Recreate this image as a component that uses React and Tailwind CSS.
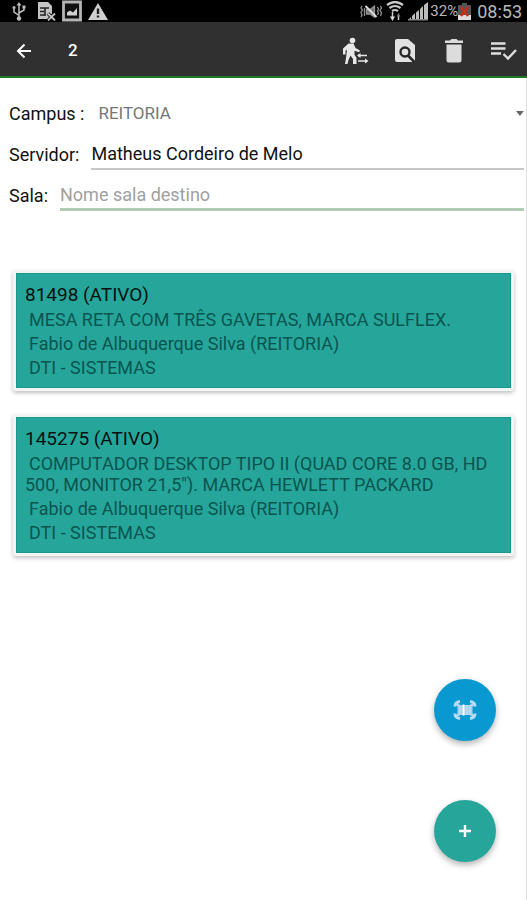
import { useState } from "react";

const items = [
  {
    code: "81498 (ATIVO)",
    description: "MESA RETA COM TRÊS GAVETAS, MARCA SULFLEX.",
    owner: "Fabio de Albuquerque Silva (REITORIA)",
    room: "DTI - SISTEMAS",
  },
  {
    code: "145275 (ATIVO)",
    description:
      'COMPUTADOR DESKTOP TIPO II (QUAD CORE 8.0 GB, HD 500, MONITOR 21,5"). MARCA HEWLETT PACKARD',
    owner: "Fabio de Albuquerque Silva (REITORIA)",
    room: "DTI - SISTEMAS",
  },
];

function UsbIcon() {
  return (
    <svg width="14" height="20" viewBox="0 0 14 20" fill="none" stroke="#bdbdbd" strokeWidth="1.5">
      <path d="M7 3v14M7 14.500L2 11V7M7 12l5-3V6" />
      <path d="M4.500 4.500L7 1l2.500 3.500z" fill="#bdbdbd" stroke="none" />
      <circle cx="7" cy="17.500" r="2.200" fill="#bdbdbd" stroke="none" />
      <circle cx="2" cy="6.500" r="1.500" fill="#bdbdbd" stroke="none" />
      <path d="M10.500 4.500h3v3h-3z" fill="#bdbdbd" stroke="none" />
    </svg>
  );
}

function SimIcon() {
  return (
    <svg width="19" height="20" viewBox="0 0 19 20">
      <path d="M1 1h10l4 4v8l-4 5H1z" fill="#c4c4c4" />
      <path d="M3 7h9M3 10.500h4M3 14h5M8 7v8" stroke="#222" strokeWidth="1.600" />
      <path d="M11 12.500l7 7M18 12.500l-7 7" stroke="#000" strokeWidth="3.500" />
      <path d="M11 12.500l7 7M18 12.500l-7 7" stroke="#c4c4c4" strokeWidth="1.800" />
    </svg>
  );
}

function ImageIcon() {
  return (
    <svg width="20" height="22" viewBox="0 0 20 22">
      <path d="M1.500 2h17v18h-17z" fill="#111" stroke="#b5b5b5" strokeWidth="2.800" />
      <path d="M5 15.500v-3l3-2 3 2 4-4.500v7.500z" fill="#d0d0d0" />
    </svg>
  );
}

function WarningIcon() {
  return (
    <svg width="20" height="17" viewBox="0 0 20 17">
      <path d="M10 0l10 17H0z" fill="#cfcfcf" />
      <path d="M10 5.500v5.500M10 12.500v2" stroke="#222" strokeWidth="2.400" />
    </svg>
  );
}

function VibrateMuteIcon() {
  return (
    <svg width="22" height="15" viewBox="0 0 22 15" fill="none" stroke="#909090" strokeWidth="1.300">
      <path d="M2 2L1 4l1.500 2L1 8.500 2 11l-1 2M4.500 4v8M17.500 3l1 2-1 2 1 2-1 2M20.500 2l1 2-1.500 2.500L21.500 9l-1 3" />
      <path d="M6.500 5.500H10L14.500 2v11L10 10H6.500z" fill="#777" />
      <path d="M5.500 2l11 11" strokeWidth="2" stroke="#ddd" />
    </svg>
  );
}

function WifiIcon() {
  return (
    <svg width="18" height="21" viewBox="0 0 18 21" fill="none" stroke="#cacaca" strokeWidth="2.200">
      <path d="M1 4q8-6 16 0M3.500 7q5.500-4 11 0M6 10q3-2 6 0" />
      <path d="M6.500 11v5M12.500 19v-5" strokeWidth="1.500" />
      <path d="M4 15.500h5L6.500 20z" fill="#ddd" stroke="none" />
      <path d="M10.500 15.500h4L12.500 12z" fill="#777" stroke="none" />
    </svg>
  );
}

function SignalIcon() {
  return (
    <svg width="21" height="20" viewBox="0 0 21 20" fill="#bcbcbc">
      <path d="M0 19l3-3v3zM4 15l3-3v7H4zM8 11.500L11 9v10H8zM12 8l3-3v14h-3zM16 4l4-3v18h-4z" />
      <path d="M0 18h20v1.500H0z" fill="#888" />
    </svg>
  );
}

function BatteryIcon() {
  return (
    <svg width="13" height="19" viewBox="0 0 13 19">
      <path d="M0 3h4V1h5v2h4v15H0z" fill="#555" />
      <path d="M0 13h13v5H0z" fill="#ddd" />
      <path d="M3 5l7 9M10 5l-7 9" stroke="#c62c1c" strokeWidth="2.500" />
    </svg>
  );
}

function BackIcon() {
  return (
    <svg width="16" height="16" viewBox="0 0 16 16" fill="none" stroke="#fff" strokeWidth="2">
      <path d="M15 8H2M8.500 1.500L2 8l6.500 6.500" />
    </svg>
  );
}

function TransferIcon() {
  return (
    <svg width="27" height="28" viewBox="0 0 27 28" fill="#e8e8e8">
      <circle cx="9.500" cy="3.500" r="2.800" />
      <path d="M5.500 6.500h5l2 4.500 4.500 2.500-1 1.800-4.500-1.500v4l2 3V27H10v-5l-2.500-3.500L5.500 23l-1 4H2l1-6 1-8.500-1.500 1.500v3.500H0v-6z" />
      <path d="M15 18.500h9M15 24h9" stroke="#e8e8e8" strokeWidth="1.500" />
      <path d="M17.500 16v5L14 18.500zM22 21.500v5l3.500-2.500z" />
    </svg>
  );
}

function FindPageIcon() {
  return (
    <svg width="20" height="24" viewBox="0 0 20 24">
      <path d="M2 0h11l7 6v15a2 2 0 0 1-2 2H2a2 2 0 0 1-2-2V2a2 2 0 0 1 2-2z" fill="#e2e2e2" />
      <circle cx="10" cy="13" r="4.500" fill="none" stroke="#262626" strokeWidth="2.400" />
      <path d="M13 16.500l6.500 6.500" stroke="#262626" strokeWidth="2.600" />
    </svg>
  );
}

function TrashIcon() {
  return (
    <svg width="18" height="24" viewBox="0 0 18 24" fill="#dcdcdc">
      <path d="M0 1.500h5L6.500 0h5L13 1.500h5V4H0zM1.500 5.500h15V21q0 2.500-2.500 2.500H4q-2.500 0-2.500-2.500z" />
    </svg>
  );
}

function ListCheckIcon() {
  return (
    <svg width="26" height="20" viewBox="0 0 26 20" fill="none" stroke="#dedede" strokeWidth="2.400">
      <path d="M0 2.500h14.500M0 7.500h14.500M0 12.500h10M12.500 13l4.500 4.500L25 9" />
    </svg>
  );
}

function ScanIcon() {
  return (
    <svg width="24" height="20" viewBox="0 0 24 20" fill="none">
      <path d="M2 6.500q0-4.500 5-5M17 1.500q5 .5 5 5M22 13.500q0 4.500-5 5M7 18.500q-5-.5-5-5" stroke="#b9dcf4" strokeWidth="3" />
      <path d="M3.500 3.500l3 3M20.500 3.500l-3 3M3.500 16.500l3-3M20.500 16.500l-3-3" stroke="#b9dcf4" strokeWidth="2.500" />
      <path d="M4.500 5h15v10h-15z" fill="#a9d0ef" />
      <path d="M10.500 4.500v11" stroke="#fff" strokeWidth="2" />
      <path d="M7 5v10M14 5v10M17 5v10" stroke="#c9e2f5" strokeWidth="1" />
    </svg>
  );
}

function PlusIcon() {
  return (
    <svg width="12" height="12" viewBox="0 0 12 12" stroke="#fff" strokeWidth="2.400">
      <path d="M6 0v12M0 6h12" />
    </svg>
  );
}

function StatusBar() {
  return (
    <div className="flex h-[22px] items-center justify-between bg-black pr-[5px] pl-3 text-[#b8b8b8]">
      <div className="flex items-center gap-[11px]">
        <UsbIcon />
        <div className="flex items-center gap-[6px]">
          <SimIcon />
          <ImageIcon />
          <WarningIcon />
        </div>
      </div>
      <div className="flex items-center">
        <div className="flex items-center gap-1">
          <VibrateMuteIcon />
          <WifiIcon />
          <SignalIcon />
        </div>
        <span className="pl-px text-[15px]">32%</span>
        <BatteryIcon />
        <span className="pl-[6px] text-[18px]">08:53</span>
      </div>
    </div>
  );
}

function Toolbar() {
  return (
    <header className="flex h-14 items-center justify-between border-b-2 border-[#1b7a22] bg-[#303030] pt-[3px] pr-[10px] pl-4">
      <div className="flex items-center gap-9">
        <button type="button" aria-label="Voltar">
          <BackIcon />
        </button>
        <span className="text-[17px] font-medium text-white">2</span>
      </div>
      <div className="flex items-center gap-[25px]">
        <button type="button" aria-label="Transferir"><TransferIcon /></button>
        <button type="button" aria-label="Buscar"><FindPageIcon /></button>
        <button type="button" aria-label="Excluir" className="pr-[3px] pl-[5px]"><TrashIcon /></button>
        <button type="button" aria-label="Confirmar"><ListCheckIcon /></button>
      </div>
    </header>
  );
}

function ItemCard({ item }) {
  return (
    <li className="rounded-[3px] border-3 border-[#f4f4f4] bg-[#f4f4f4] shadow-[0_2px_4px_rgba(0,0,0,0.25)]">
      <div className="flex flex-col gap-[3px] border border-[#159b8b] bg-[#26a69a] px-2 pt-[10px] pb-[9px] text-[18px] leading-[21px] text-[#0b5550]">
        <h2 className="text-[19px] leading-[22px] text-[#04110f]">{item.code}</h2>
        <p className="indent-1">{item.description}</p>
        <p className="indent-1">{item.owner}</p>
        <p className="indent-1">{item.room}</p>
      </div>
    </li>
  );
}

export default function App() {
  const [person, setPerson] = useState("Matheus Cordeiro de Melo");
  const [room, setRoom] = useState("");

  return (
    <div className="flex min-h-screen flex-col bg-white font-['Roboto',sans-serif] text-[#111]">
      <StatusBar />
      <Toolbar />
      <main className="flex-1 border-r border-[#e0e0e0]">
        <form className="flex flex-col pt-[15px] pr-[2px] pl-[9px] text-[18px]">
          <div className="flex h-[41px] items-center gap-3">
            <label htmlFor="campus">Campus :</label>
            <div className="flex flex-1 items-center pl-[2px]">
              <select id="campus" className="w-full appearance-none bg-transparent text-[17px] text-[#777] outline-none">
                <option>REITORIA</option>
              </select>
              <svg width="8" height="5" viewBox="0 0 8 5" fill="#666">
                <path d="M0 0h8L4 5z" />
              </svg>
            </div>
          </div>
          <div className="flex h-[41px] items-center gap-3">
            <label htmlFor="servidor">Servidor:</label>
            <input
              id="servidor"
              value={person}
              onChange={(e) => setPerson(e.target.value)}
              className="h-[30px] min-w-0 flex-1 border-b-2 border-[#c8c8c8] outline-none"
            />
          </div>
          <div className="flex h-[41px] items-center gap-3">
            <label htmlFor="sala">Sala:</label>
            <input
              id="sala"
              value={room}
              placeholder="Nome sala destino"
              onChange={(e) => setRoom(e.target.value)}
              className="h-[30px] min-w-0 flex-1 border-b-3 border-[#b0ccb4] outline-none placeholder:text-[#a0a0a0]"
            />
          </div>
        </form>
        <ul className="flex flex-col gap-[23px] pt-[54px] pr-3 pl-[13px]">
          {items.map((item) => (
            <ItemCard key={item.code} item={item} />
          ))}
        </ul>
      </main>
      <div className="fixed right-[31px] bottom-[38px] flex flex-col gap-[59px]">
        <button
          type="button"
          aria-label="Ler código de barras"
          className="flex size-[62px] items-center justify-center rounded-full bg-[#0799d0] shadow-[0_3px_6px_rgba(0,0,0,0.3)]"
        >
          <ScanIcon />
        </button>
        <button
          type="button"
          aria-label="Adicionar"
          className="flex size-[62px] items-center justify-center rounded-full bg-[#26a69a] shadow-[0_3px_6px_rgba(0,0,0,0.3)]"
        >
          <PlusIcon />
        </button>
      </div>
    </div>
  );
}
